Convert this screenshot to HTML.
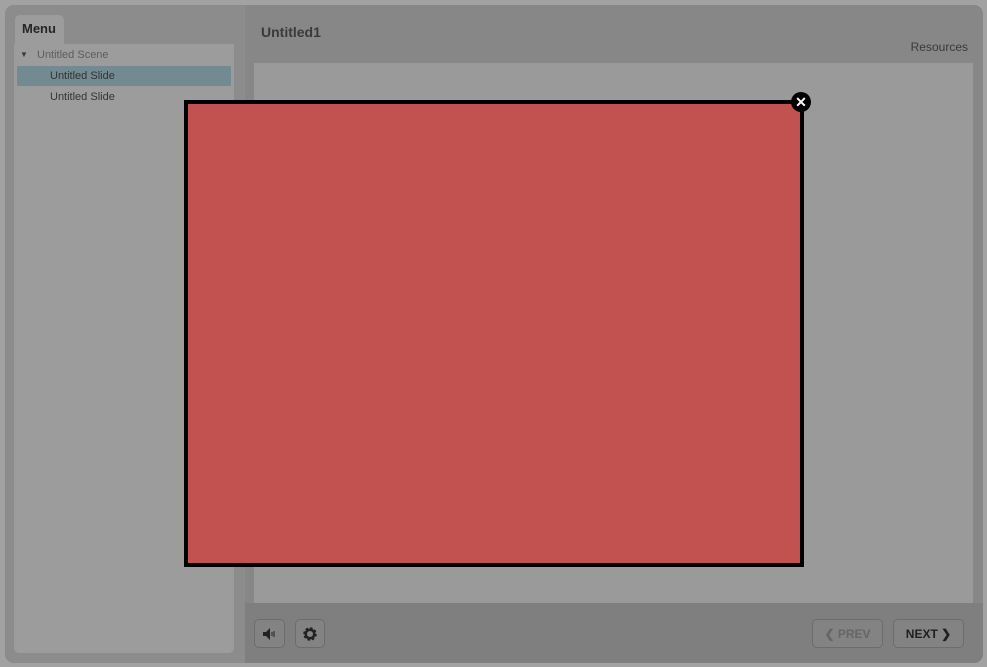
<!DOCTYPE html>
<html><head><style>
*{margin:0;padding:0;box-sizing:border-box}
body{width:987px;height:667px;background:#a2a2a2;font-family:"Liberation Sans",sans-serif;position:relative;overflow:hidden}
.frame{position:absolute;left:5px;top:5px;width:978px;height:658px;background:#8c8c8c;border-radius:9px;overflow:hidden}
.side{position:absolute;left:0;top:0;width:240px;height:658px;background:#8c8c8c}
.tab{position:absolute;left:10px;top:10px;width:49px;height:30px;background:#9c9c9c;border-radius:5px 5px 0 0;font-weight:bold;font-size:13px;color:#262626;padding:6px 0 0 7px}
.panel{position:absolute;left:9px;top:39px;width:220px;height:609px;background:#9c9c9c;border-radius:0 0 5px 5px}
.row{position:absolute;font-size:11px;color:#333}
.main{position:absolute;left:240px;top:0;width:738px;height:658px;background:#878787}
.title{position:absolute;left:16px;top:19px;font-size:14px;font-weight:bold;color:#3a3a3a}
.res{position:absolute;right:15px;top:35px;font-size:12px;color:#3a3a3a}
.slide{position:absolute;left:9px;top:58px;width:719px;height:540px;background:#9a9a9a}
.bar{position:absolute;left:0;top:598px;width:738px;height:60px;background:#7f7f7f}
.btn{position:absolute;top:16px;height:29px;border:1px solid #6c6c6c;border-radius:5px;background:#838383;font-size:12px;font-weight:bold;display:flex;align-items:center;justify-content:center}
.red{position:absolute;left:184px;top:100px;width:620px;height:467px;background:#c1524f;border:4px solid #000}
.x{position:absolute;left:791px;top:92px;width:20px;height:20px;border-radius:50%;background:#000;color:#fff;font-weight:bold;font-size:14px;line-height:20px;text-align:center}
</style></head><body>
<div class="frame">
 <div class="side">
  <div class="tab">Menu</div>
  <div class="panel">
   <div class="row" style="left:6px;top:6px;color:#3a3a3a;font-size:8px">▼</div>
   <div class="row" style="left:23px;top:5px;color:#5d5d5d">Untitled Scene</div>
   <div style="position:absolute;left:3px;top:22px;width:214px;height:20px;background:#738a93"></div>
   <div class="row" style="left:36px;top:26px">Untitled Slide</div>
   <div class="row" style="left:36px;top:47px">Untitled Slide</div>
  </div>
 </div>
 <div class="main">
  <div class="title">Untitled1</div>
  <div class="res">Resources</div>
  <div class="slide"></div>
  <div class="bar">
   <div class="btn" style="left:9px;width:31px">
    <svg width="14" height="12" viewBox="0 0 14 12"><path d="M0 4h3l4-4v12l-4-4H0z" fill="#222"/><path d="M9 4v4M11 3v6" stroke="#222" stroke-width="1"/></svg></div>
   <div class="btn" style="left:50px;width:30px">
    <svg width="16" height="16" viewBox="0 0 16 16"><circle cx="8" cy="8" r="5" fill="none" stroke="#222" stroke-width="3.5" stroke-dasharray="2.2 1.7"/><circle cx="8" cy="8" r="4.3" fill="none" stroke="#222" stroke-width="2.5"/></svg></div>
   <div class="btn" style="left:567px;width:71px;color:#666">❮ PREV</div>
   <div class="btn" style="left:648px;width:71px;color:#1f1f1f">NEXT ❯</div>
  </div>
 </div>
</div>
<div class="red"></div>
<div class="x">✕</div>
</body></html>
